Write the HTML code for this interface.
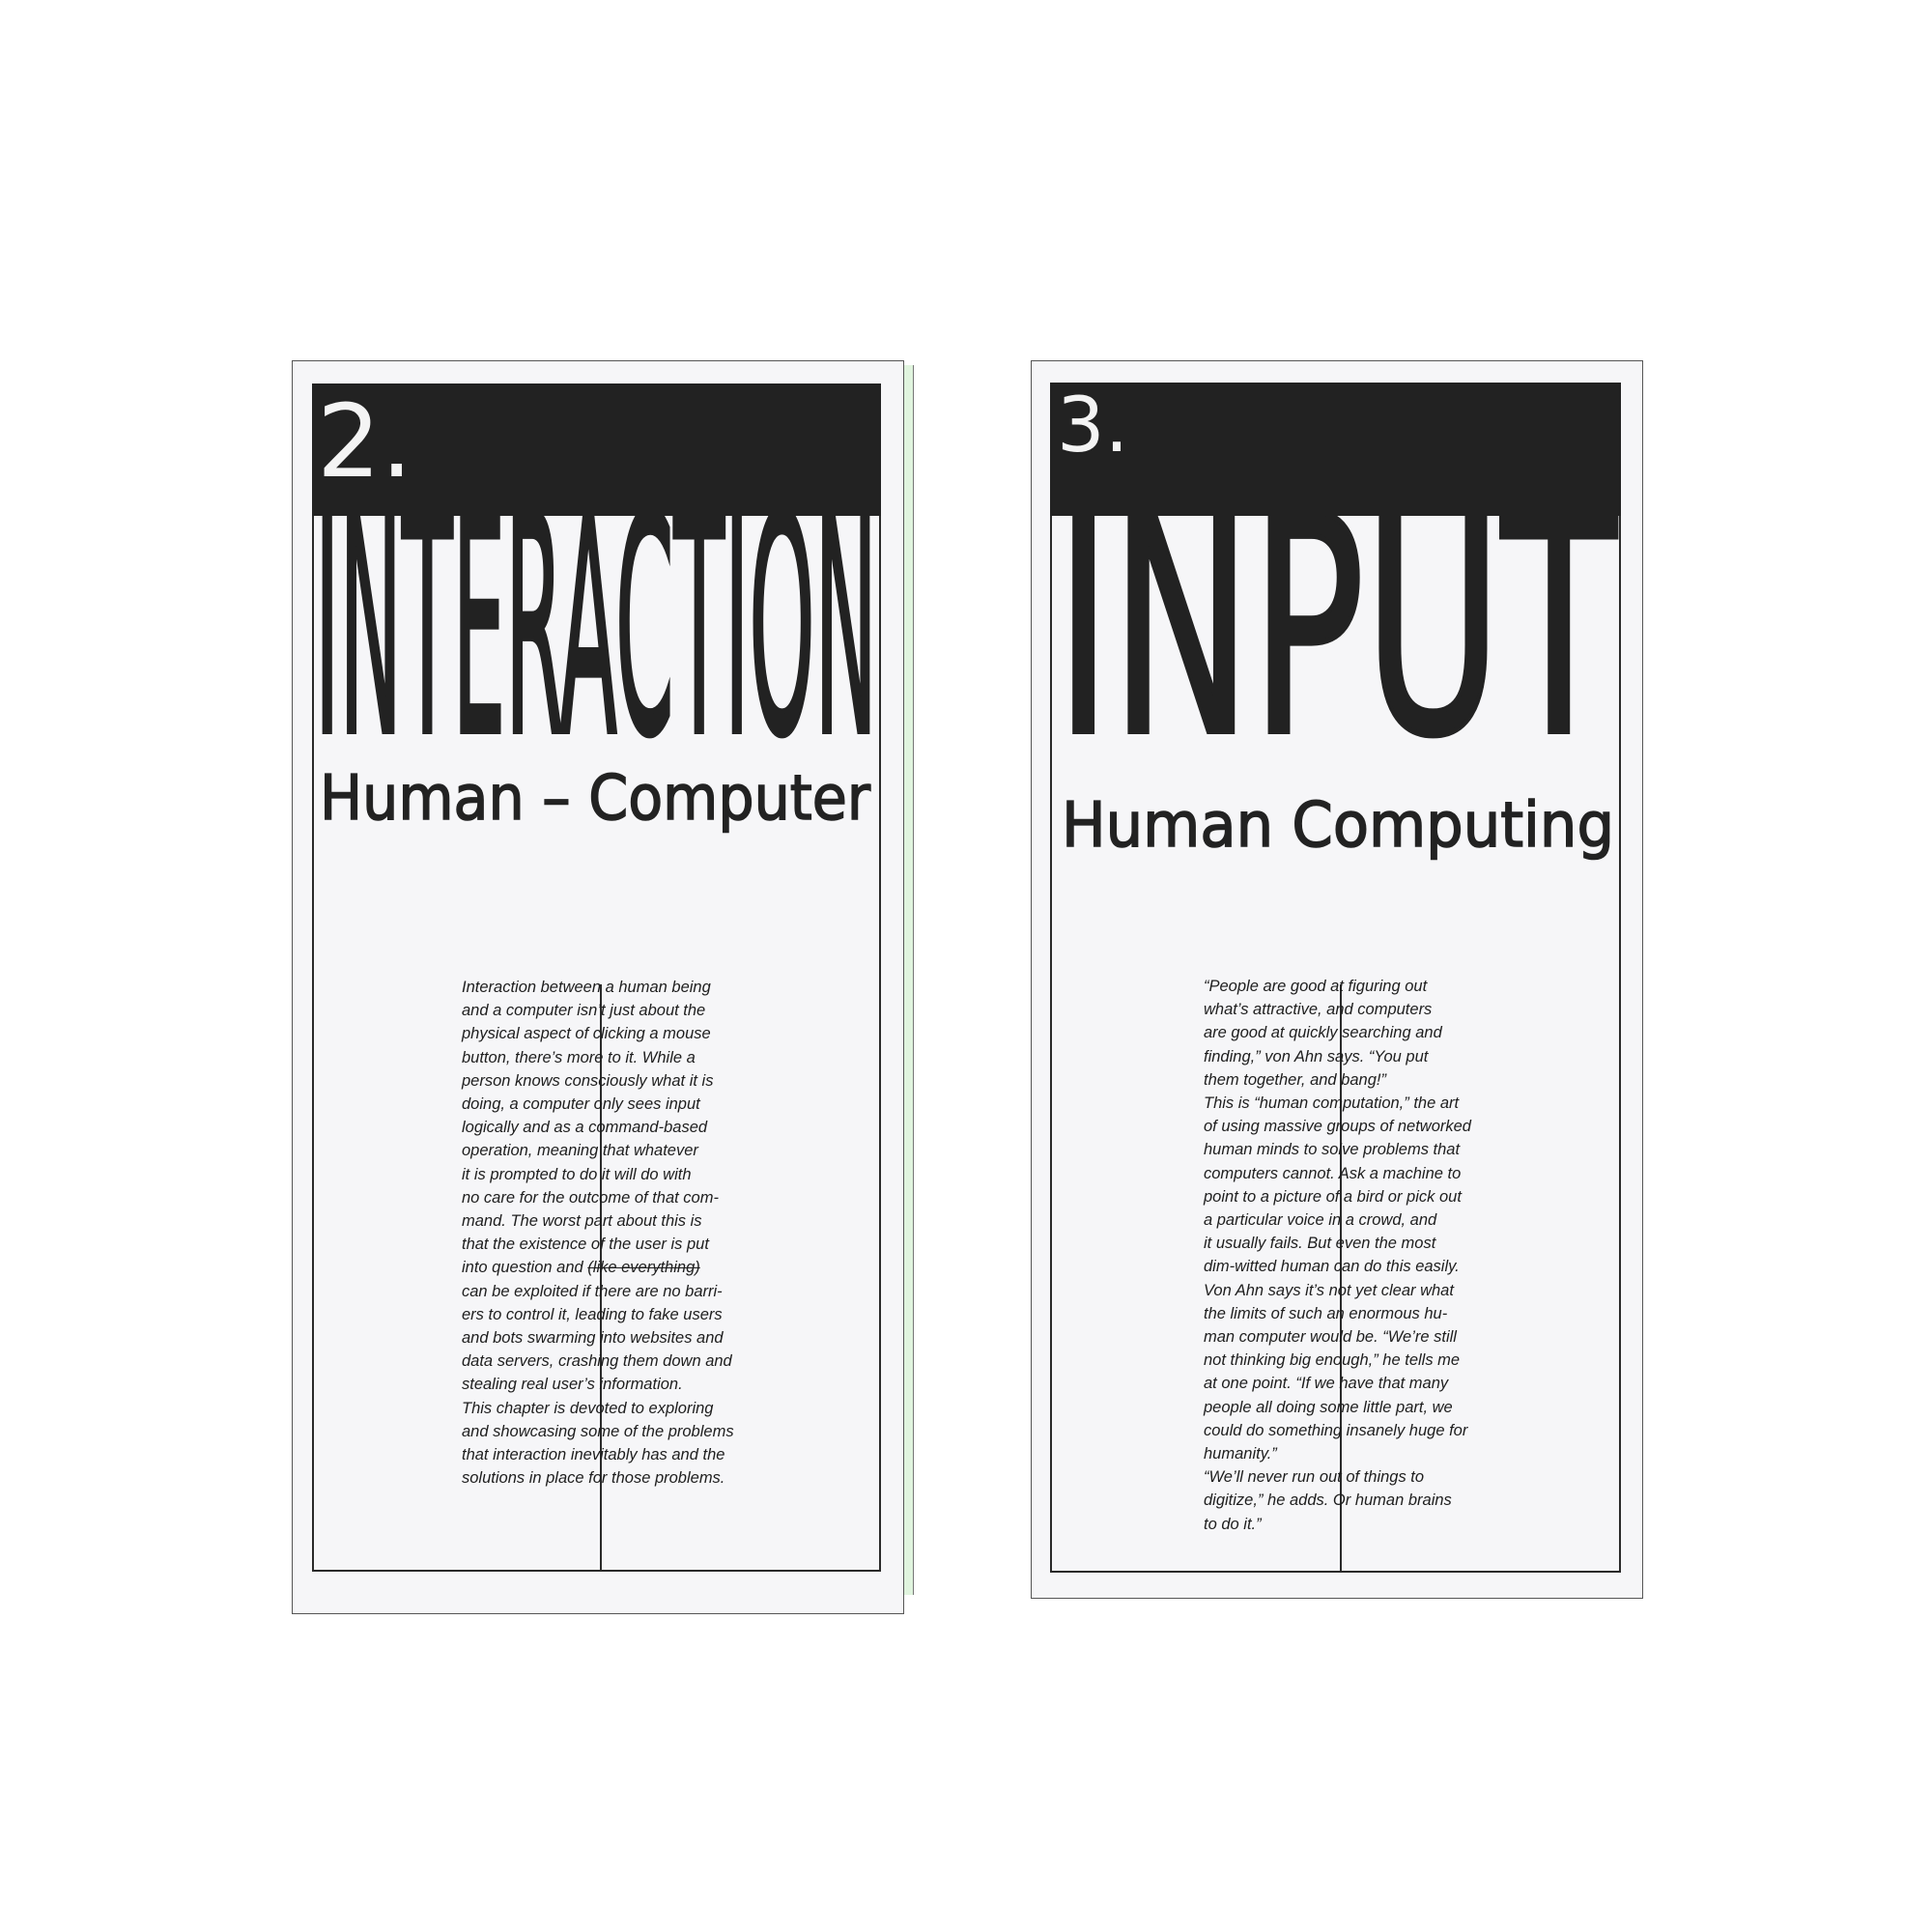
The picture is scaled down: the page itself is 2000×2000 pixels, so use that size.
<!DOCTYPE html>
<html><head><meta charset="utf-8"><style>
*{margin:0;padding:0}
body{width:2000px;height:2000px;background:#fff;position:relative;overflow:hidden;font-family:"DejaVu Sans","Liberation Sans",sans-serif}
.abs{position:absolute}
.paper{position:absolute;background:#f6f6f8;border:1px solid #555}
.vl{position:absolute;background:#2a2a2a;width:2px}
.hl{position:absolute;background:#2a2a2a;height:2px}
.txt{position:absolute;font-family:"Liberation Sans",sans-serif;font-style:italic;font-size:16.5px;line-height:24.2px;color:#1e1e1e;white-space:nowrap}
svg{position:absolute;left:0;top:0}
</style></head><body>
<div class="abs" style="left:915px;top:378px;width:30px;height:1273px;background:#e0f4de;border-right:1px solid #777"></div>
<div class="paper" style="left:302px;top:373px;width:632px;height:1296px"></div>
<div class="paper" style="left:1067px;top:373px;width:632px;height:1280px"></div>

<div class="vl" style="left:323px;top:397px;height:1230px"></div>
<div class="vl" style="left:910px;top:397px;height:1230px"></div>
<div class="hl" style="left:323px;top:1625px;width:589px"></div>
<div class="vl" style="left:621px;top:1019px;height:607px"></div>
<div class="vl" style="left:1087px;top:396px;height:1232px"></div>
<div class="vl" style="left:1676px;top:396px;height:1232px"></div>
<div class="hl" style="left:1087px;top:1626px;width:591px"></div>
<div class="vl" style="left:1387px;top:1019px;height:608px"></div>

<svg width="2000" height="2000" viewBox="0 0 2000 2000">
  <text x="326" y="757" font-family="DejaVu Sans" font-size="312" fill="#222" stroke="#222" stroke-width="6" textLength="582" lengthAdjust="spacingAndGlyphs">INTERACTION</text>
  <text x="1093" y="757" font-family="DejaVu Sans" font-size="312" fill="#222" stroke="#222" stroke-width="6" textLength="580" lengthAdjust="spacingAndGlyphs">INPUT</text>
  <rect x="323" y="397" width="589" height="137" fill="#222"/>
  <rect x="1087" y="396" width="591" height="138" fill="#222"/>
  <text x="328" y="493" font-family="DejaVu Sans" font-size="104" fill="#f4f4f4">2.</text>
  <text x="1094" y="467" font-family="DejaVu Sans" font-size="78" fill="#f4f4f4">3.</text>
  <text x="331" y="848" font-family="DejaVu Sans" font-size="64" fill="#222" stroke="#222" stroke-width="1.6" textLength="570" lengthAdjust="spacingAndGlyphs">Human – Computer</text>
  <text x="1099" y="876" font-family="DejaVu Sans" font-size="64" fill="#222" stroke="#222" stroke-width="1.6" textLength="572" lengthAdjust="spacingAndGlyphs">Human Computing</text>
</svg>

<div class="txt" style="left:478px;top:1010px">Interaction between a human being<br>and a computer isn’t just about the<br>physical aspect of clicking a mouse<br>button, there’s more to it. While a<br>person knows consciously what it is<br>doing, a computer only sees input<br>logically and as a command-based<br>operation, meaning that whatever<br>it is prompted to do it will do with<br>no care for the outcome of that com-<br>mand. The worst part about this is<br>that the existence of the user is put<br>into question and <s>(like everything)</s><br>can be exploited if there are no barri-<br>ers to control it, leading to fake users<br>and bots swarming into websites and<br>data servers, crashing them down and<br>stealing real user’s information.<br>This chapter is devoted to exploring<br>and showcasing some of the problems<br>that interaction inevitably has and the<br>solutions in place for those problems.</div>

<div class="txt" style="left:1246px;top:1009px">“People are good at figuring out<br>what’s attractive, and computers<br>are good at quickly searching and<br>finding,” von Ahn says. “You put<br>them together, and bang!”<br>This is “human computation,” the art<br>of using massive groups of networked<br>human minds to solve problems that<br>computers cannot. Ask a machine to<br>point to a picture of a bird or pick out<br>a particular voice in a crowd, and<br>it usually fails. But even the most<br>dim-witted human can do this easily.<br>Von Ahn says it’s not yet clear what<br>the limits of such an enormous hu-<br>man computer would be. “We’re still<br>not thinking big enough,” he tells me<br>at one point. “If we have that many<br>people all doing some little part, we<br>could do something insanely huge for<br>humanity.”<br>“We’ll never run out of things to<br>digitize,” he adds. Or human brains<br>to do it.”</div>
</body></html>
